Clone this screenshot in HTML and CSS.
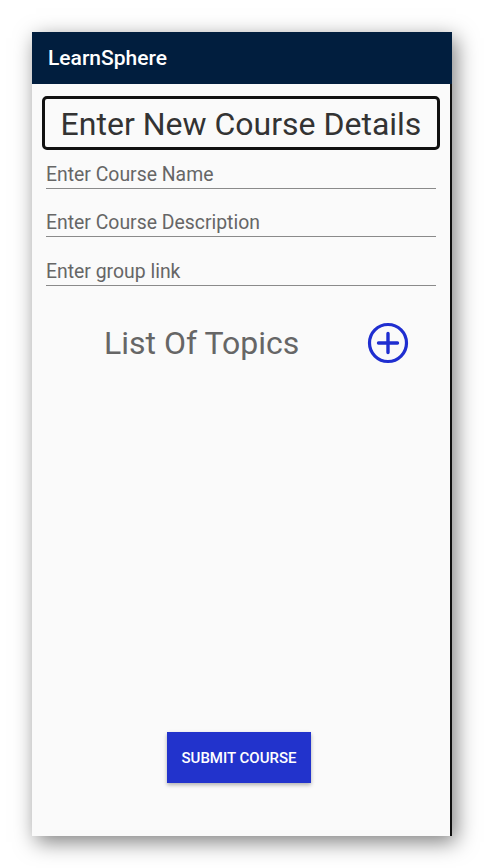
FILE: index.html
```html
<!DOCTYPE html>
<html>
<head>
<meta charset="utf-8">
<link rel="stylesheet" href="styles.css">
</head>
<body>
<div class="screen">
  <div class="appbar">LearnSphere</div>
  <div class="content">
    <div class="title-box">Enter New Course Details</div>
    <div class="field first"><span class="hint">Enter Course Name</span></div>
    <div class="field"><span class="hint">Enter Course Description</span></div>
    <div class="field last"><span class="hint">Enter group link</span></div>
    <div class="topics-row">
      <span class="topics-title">List Of Topics</span>
      <svg class="add-icon" width="42" height="42" viewBox="0 0 42 42">
        <circle cx="21" cy="21" r="18.5" fill="none" stroke="#1f2ed0" stroke-width="3.2"/>
        <path d="M21 11.5 V30.5 M11.5 21 H30.5" stroke="#1f2ed0" stroke-width="3.4" stroke-linecap="round"/>
      </svg>
    </div>
    <div class="spacer"></div>
    <div class="button-row">
      <button class="submit">SUBMIT COURSE</button>
    </div>
  </div>
</div>
</body>
</html>
```
FILE: styles.css
```css
html, body {
  margin: 0;
  padding: 0;
  background: #ffffff;
}
body {
  width: 484px;
  height: 868px;
  overflow: hidden;
  font-family: Roboto, "Liberation Sans", sans-serif;
}
.screen {
  margin: 32px 0 0 32px;
  width: 420px;
  height: 804px;
  background: #fafafa;
  display: flex;
  flex-direction: column;
  box-shadow: 4px 6px 20px rgba(0, 0, 0, 0.5);
}
.appbar {
  height: 52px;
  background: #011e3e;
  color: #ffffff;
  font-size: 21px;
  font-weight: 500;
  display: flex;
  align-items: center;
  padding-left: 16px;
  padding-bottom: 1px;
  box-sizing: border-box;
  flex-shrink: 0;
}
.content {
  flex: 1;
  display: flex;
  flex-direction: column;
  border-right: 2px solid #111;
  padding-top: 12px;
}
.title-box {
  margin-left: 10px;
  width: 392px;
  height: 47px;
  border: 3px solid #111;
  border-radius: 5px;
  font-size: 32px;
  color: #333;
  display: flex;
  align-items: center;
  justify-content: center;
  padding-top: 1px;
  box-sizing: content-box;
}
.field {
  margin-left: 14px;
  width: 390px;
  height: 48px;
  border-bottom: 1.5px solid #8a8a8a;
  display: flex;
  align-items: flex-end;
  box-sizing: border-box;
}
.field.first {
  height: 39px;
}
.field.last {
  height: 49px;
}
.hint {
  font-size: 19.4px;
  color: #666;
  padding-bottom: 2px;
}
.topics-row {
  display: flex;
  align-items: center;
  height: 48px;
  margin-top: 33px;
}
.topics-title {
  font-size: 32px;
  color: #666;
  margin-left: 72px;
}
.add-icon {
  margin-left: 68px;
}
.spacer {
  flex: 1;
}
.button-row {
  display: flex;
  justify-content: center;
  padding-right: 4px;
  margin-bottom: 53px;
}
.submit {
  width: 144px;
  height: 51px;
  background: #2233cc;
  color: #fff;
  border: none;
  font-family: Roboto, "Liberation Sans", sans-serif;
  font-size: 15px;
  font-weight: 500;
  box-shadow: 0 2px 4px rgba(0, 0, 0, 0.3);
  padding: 0;
}
```
